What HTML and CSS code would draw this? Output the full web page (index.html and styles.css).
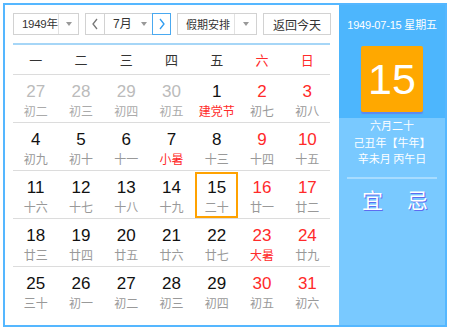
FILE: index.html
```html
<!DOCTYPE html>
<html lang="zh">
<head>
<meta charset="utf-8">
<link rel="stylesheet" href="styles.css">
</head>
<body>
<div class="cal">
  <div class="main">
    <div class="controls">
      <div class="sel sel-year"><span class="sel-text">1949年</span><span class="sel-arrow"><i class="tri"></i></span></div>
      <div class="month-group">
        <span class="nav prev"><svg width="8" height="12" viewBox="0 0 8 12"><path d="M6 1 L2 6 L6 11" fill="none" stroke="#777" stroke-width="1.3"/></svg></span>
        <span class="sel-text month-text">7月</span><span class="sel-arrow m-arrow"><i class="tri"></i></span>
        <span class="nav next"><svg width="8" height="12" viewBox="0 0 8 12"><path d="M2 1 L6 6 L2 11" fill="none" stroke="#2f9cf0" stroke-width="1.3"/></svg></span>
      </div>
      <div class="sel sel-hol"><span class="sel-text">假期安排</span><span class="sel-arrow"><i class="tri"></i></span></div>
      <div class="btn-today">返回今天</div>
    </div>
    <div class="bar"></div>
    <div class="grid head">
      <div>一</div><div>二</div><div>三</div><div>四</div><div>五</div><div class="red">六</div><div class="red">日</div>
    </div>
    <div class="grid row">
      <div class="cell other"><b>27</b><span>初二</span></div>
      <div class="cell other"><b>28</b><span>初三</span></div>
      <div class="cell other"><b>29</b><span>初四</span></div>
      <div class="cell other"><b>30</b><span>初五</span></div>
      <div class="cell"><b>1</b><span class="red">建党节</span></div>
      <div class="cell wk"><b>2</b><span>初七</span></div>
      <div class="cell wk"><b>3</b><span>初八</span></div>
    </div>
    <div class="grid row">
      <div class="cell"><b>4</b><span>初九</span></div>
      <div class="cell"><b>5</b><span>初十</span></div>
      <div class="cell"><b>6</b><span>十一</span></div>
      <div class="cell"><b>7</b><span class="red">小暑</span></div>
      <div class="cell"><b>8</b><span>十三</span></div>
      <div class="cell wk"><b>9</b><span>十四</span></div>
      <div class="cell wk"><b>10</b><span>十五</span></div>
    </div>
    <div class="grid row">
      <div class="cell"><b>11</b><span>十六</span></div>
      <div class="cell"><b>12</b><span>十七</span></div>
      <div class="cell"><b>13</b><span>十八</span></div>
      <div class="cell"><b>14</b><span>十九</span></div>
      <div class="cell sel-day"><b>15</b><span>二十</span></div>
      <div class="cell wk"><b>16</b><span>廿一</span></div>
      <div class="cell wk"><b>17</b><span>廿二</span></div>
    </div>
    <div class="grid row">
      <div class="cell"><b>18</b><span>廿三</span></div>
      <div class="cell"><b>19</b><span>廿四</span></div>
      <div class="cell"><b>20</b><span>廿五</span></div>
      <div class="cell"><b>21</b><span>廿六</span></div>
      <div class="cell"><b>22</b><span>廿七</span></div>
      <div class="cell wk"><b>23</b><span class="red">大暑</span></div>
      <div class="cell wk"><b>24</b><span>廿九</span></div>
    </div>
    <div class="grid row">
      <div class="cell"><b>25</b><span>三十</span></div>
      <div class="cell"><b>26</b><span>初一</span></div>
      <div class="cell"><b>27</b><span>初二</span></div>
      <div class="cell"><b>28</b><span>初三</span></div>
      <div class="cell"><b>29</b><span>初四</span></div>
      <div class="cell wk"><b>30</b><span>初五</span></div>
      <div class="cell wk"><b>31</b><span>初六</span></div>
    </div>
  </div>
  <div class="side">
    <div class="side-top">
      <div class="side-date">1949-07-15 星期五</div>
      <div class="big-day">15</div>
    </div>
    <div class="side-bottom">
      <div class="lunar">六月二十</div>
      <div class="lunar">己丑年【牛年】</div>
      <div class="lunar">辛未月 丙午日</div>
      <div class="divider"></div>
      <div class="yiji"><span>宜</span><span>忌</span></div>
    </div>
  </div>
</div>
</body>
</html>
```
FILE: styles.css
```css
* { box-sizing: border-box; }
html, body { margin: 0; padding: 0; background: #fff; }
body { font-family: "Liberation Sans", "Noto Sans CJK SC", sans-serif; color: #333; }

.cal {
  margin: 3px;
  width: 444px;
  height: 324px;
  border: 2px solid #55b7ff;
  display: flex;
  background: #fff;
}
.main {
  width: 334px;
  flex: none;
  padding: 8px 9px 0 8px;
}
.controls {
  display: flex;
  height: 22px;
  gap: 6px;
  font-size: 12px;
  white-space: nowrap;
}
.sel {
  display: flex;
  flex: none;
  border: 1px solid #d2d2d2;
  height: 22px;
  align-items: stretch;
}
.sel-year { width: 66px; }
.sel-hol { width: 80px; }
.sel-text {
  flex: 1;
  min-width: 0;
  display: flex;
  align-items: center;
  padding-left: 8px;
  color: #333;
  font-family: "Noto Sans CJK SC", sans-serif;
  font-size: 12px;
  line-height: 20px;
  white-space: nowrap;
}
.sel-year .sel-text {
  font-family: "Liberation Sans", "Noto Sans CJK SC", sans-serif;
  font-size: 11.5px;
  padding-left: 8px;
  letter-spacing: -0.3px;
}
.sel-hol .sel-text { padding-left: 8px; font-size: 11px; }
.sel-arrow {
  width: 20px;
  flex: none;
  border-left: 1px solid #e2e2e2;
  display: flex;
  align-items: center;
  justify-content: center;
}
.sel-hol .sel-arrow { width: 22px; }
.tri {
  width: 0; height: 0;
  border-left: 3.5px solid transparent;
  border-right: 3.5px solid transparent;
  border-top: 4px solid #999;
}
.month-group {
  display: flex;
  flex: none;
  width: 86px;
  height: 22px;
  border: 1px solid #d2d2d2;
  border-right: none;
}
.nav {
  width: 19px;
  flex: none;
  display: flex;
  align-items: center;
  justify-content: center;
}
.prev { border-right: 1px solid #d2d2d2; }
.next {
  border: 1px solid #4aa9f0;
  margin: -1px 0;
  height: 22px;
  width: 19px;
}
.month-text {
  padding-left: 8px;
  font-family: "Liberation Sans", "Noto Sans CJK SC", sans-serif;
}
.m-arrow { border-left: none; width: 16px; }
.btn-today {
  width: 68px;
  flex: none;
  border: 1px solid #d2d2d2;
  display: flex;
  align-items: center;
  justify-content: center;
  font-family: "Noto Sans CJK SC", sans-serif;
  font-size: 12px;
  color: #333;
}
.bar {
  margin-top: 8px;
  height: 2px;
  background: #a6d6f7;
}
.grid {
  display: grid;
  grid-template-columns: repeat(7, 1fr);
}
.head > div {
  height: 29px;
  line-height: 29px;
  text-align: center;
  font-family: "Noto Sans CJK SC", sans-serif;
  font-size: 13px;
  color: #333;
}
.red { color: #ff2a2a !important; }
.row {
  border-top: 1px solid #dcdcdc;
  height: 48px;
}
.cell {
  display: flex;
  flex-direction: column;
  align-items: center;
  margin: 1px 1px 0 1px;
  border: 2px solid transparent;
  height: 46px;
  padding-top: 5px;
}
.cell b {
  font-weight: normal;
  font-size: 17px;
  line-height: 18px;
  color: #111;
  font-family: "Liberation Sans", sans-serif;
}
.cell span {
  margin-top: 2px;
  font-size: 12px;
  line-height: 16px;
  color: #999;
  font-family: "Noto Sans CJK SC", sans-serif;
}
.cell.other b { color: #bbb; }
.cell.other span { color: #aaa; }
.cell.wk b { color: #ff2a2a; }
.cell.sel-day { border-color: #ffa200; }

.side {
  width: 106px;
  flex: none;
  background: #79c9ff;
  display: flex;
  flex-direction: column;
  color: #fff;
}
.side-top {
  background: #4db6fd;
  height: 113px;
  display: flex;
  flex-direction: column;
  align-items: center;
}
.side-date {
  margin-top: 12px;
  font-size: 11px;
  line-height: 16px;
  letter-spacing: -0.2px;
  white-space: nowrap;
  font-family: "Liberation Sans", "Noto Sans CJK SC", sans-serif;
}
.big-day {
  margin-top: 13px;
  width: 62px;
  height: 66px;
  background: #ffa800;
  border-radius: 2px;
  font-family: "Liberation Sans", sans-serif;
  font-size: 43px;
  line-height: 66px;
  text-align: center;
  color: #fff;
  box-shadow: 0 2px 1px rgba(110, 100, 230, 0.55);
}
.side-bottom {
  display: flex;
  flex-direction: column;
  align-items: center;
  margin-top: -1px;
}
.lunar {
  font-family: "Noto Sans CJK SC", sans-serif;
  font-size: 11px;
  line-height: 16.5px;
  white-space: nowrap;
}
.divider {
  margin-top: 10px;
  width: 90px;
  height: 2px;
  background: #a7dcff;
}
.yiji {
  margin-top: 7px;
  padding-left: 6px;
  display: flex;
  gap: 24px;
  font-family: "Noto Sans CJK SC", sans-serif;
  font-size: 21px;
  line-height: 26px;
  text-shadow: 1px 1px 0 #5d6cf0;
}
```
